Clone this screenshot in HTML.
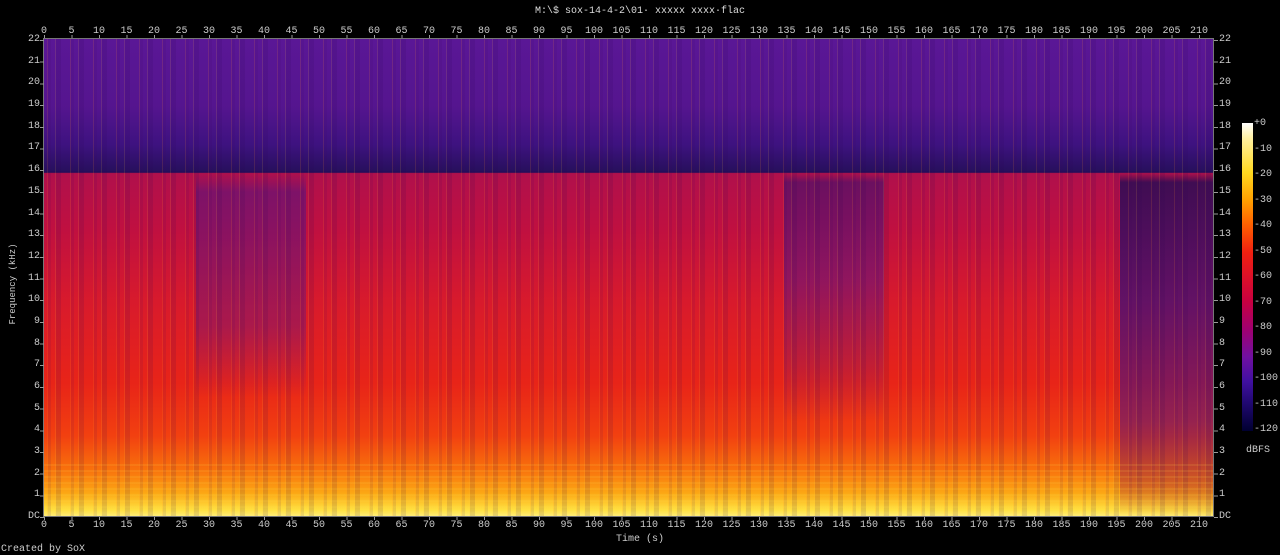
<!DOCTYPE html>
<html><head><style>
body{margin:0;background:#000;width:1280px;height:555px;overflow:hidden;position:relative;font-family:"Liberation Mono",monospace;font-size:10px;color:#ccc}
.a{position:absolute}
.t{position:absolute;transform:translateX(-50%);line-height:10px}
.f{position:absolute;line-height:10px;transform:translateY(-50%)}
#plot{left:44px;top:39px;width:1170px;height:478px;overflow:hidden;
background:linear-gradient(to bottom,#5a1796 0%,#55158f 14%,#3e1280 22%,#28105e 27.5%,#230d58 27.9%,#b0104c 28.1%,#c01040 40%,#d81a2c 55%,#e82418 72%,#f24010 83%,#f8700c 90%,#fca814 95%,#ffe040 98.5%,#fff080 100%)}
.o{position:absolute;top:0;height:100%}
</style></head><body>
<div class="a" style="left:0;top:6px;width:1280px;text-align:center;color:#ddd">M:\$ sox-14-4-2\01· xxxxx xxxx·flac</div>
<div class="a" id="plot">
 <div class="o" style="left:152px;width:110px;background:linear-gradient(to bottom,transparent 28%,rgba(80,20,130,.55) 32%,rgba(110,20,120,.45) 60%,transparent 75%)"></div>
 <div class="o" style="left:740px;width:100px;background:linear-gradient(to bottom,transparent 28%,rgba(60,15,110,.6) 30%,rgba(90,20,130,.55) 50%,rgba(110,20,110,.3) 68%,transparent 80%)"></div>
 <div class="o" style="left:1076px;width:94px;background:linear-gradient(to bottom,transparent 28%,rgba(35,12,85,.8) 30%,rgba(60,15,120,.75) 55%,rgba(90,20,120,.6) 80%,rgba(150,20,60,.4) 93%,transparent 100%)"></div>
 <div class="o" style="left:0;width:100%;background:repeating-linear-gradient(to right,rgba(255,160,40,0) 0 3px,rgba(255,140,40,.14) 3px 4px,rgba(60,0,90,.1) 4px 7px,rgba(0,0,0,0) 7px 11px,rgba(255,200,60,.12) 11px 12px,rgba(40,0,80,.12) 12px 17px,rgba(0,0,0,0) 17px 23px)"></div>
 <div class="o" style="left:0;width:100%;background:repeating-linear-gradient(to bottom,rgba(0,0,0,0) 0 4px,rgba(255,220,80,.12) 4px 6px);height:12%;top:88%"></div>
</div>
<div class="a" style="left:43px;top:38px;width:1171px;height:479px;border:1px solid #777;box-sizing:border-box"></div>
<div class="a" style="left:44px;top:35px;width:1170px;height:3px;background:repeating-linear-gradient(to right,#999 0 1px,transparent 1px 27.5px)"></div>
<div class="a" style="left:44px;top:517px;width:1170px;height:3px;background:repeating-linear-gradient(to right,#999 0 1px,transparent 1px 27.5px)"></div>
<div class="a" style="left:40px;top:40px;width:4px;height:478px;background:repeating-linear-gradient(to top,#999 0 1px,transparent 1px 21.68px)"></div>
<div class="a" style="left:1214px;top:40px;width:4px;height:478px;background:repeating-linear-gradient(to top,#999 0 1px,transparent 1px 21.68px)"></div>

<div style="position:absolute;top:27px;left:0">
<span class="t" style="left:44px">0</span><span class="t" style="left:71.5px">5</span><span class="t" style="left:99px">10</span><span class="t" style="left:126.5px">15</span><span class="t" style="left:154px">20</span><span class="t" style="left:181.5px">25</span><span class="t" style="left:209px">30</span><span class="t" style="left:236.5px">35</span><span class="t" style="left:264px">40</span><span class="t" style="left:291.5px">45</span><span class="t" style="left:319px">50</span><span class="t" style="left:346.5px">55</span><span class="t" style="left:374px">60</span><span class="t" style="left:401.5px">65</span><span class="t" style="left:429px">70</span><span class="t" style="left:456.5px">75</span><span class="t" style="left:484px">80</span><span class="t" style="left:511.5px">85</span><span class="t" style="left:539px">90</span><span class="t" style="left:566.5px">95</span><span class="t" style="left:594px">100</span><span class="t" style="left:621.5px">105</span><span class="t" style="left:649px">110</span><span class="t" style="left:676.5px">115</span><span class="t" style="left:704px">120</span><span class="t" style="left:731.5px">125</span><span class="t" style="left:759px">130</span><span class="t" style="left:786.5px">135</span><span class="t" style="left:814px">140</span><span class="t" style="left:841.5px">145</span><span class="t" style="left:869px">150</span><span class="t" style="left:896.5px">155</span><span class="t" style="left:924px">160</span><span class="t" style="left:951.5px">165</span><span class="t" style="left:979px">170</span><span class="t" style="left:1006.5px">175</span><span class="t" style="left:1034px">180</span><span class="t" style="left:1061.5px">185</span><span class="t" style="left:1089px">190</span><span class="t" style="left:1116.5px">195</span><span class="t" style="left:1144px">200</span><span class="t" style="left:1171.5px">205</span><span class="t" style="left:1199px">210</span>
</div>
<div style="position:absolute;top:521px;left:0">
<span class="t" style="left:44px">0</span><span class="t" style="left:71.5px">5</span><span class="t" style="left:99px">10</span><span class="t" style="left:126.5px">15</span><span class="t" style="left:154px">20</span><span class="t" style="left:181.5px">25</span><span class="t" style="left:209px">30</span><span class="t" style="left:236.5px">35</span><span class="t" style="left:264px">40</span><span class="t" style="left:291.5px">45</span><span class="t" style="left:319px">50</span><span class="t" style="left:346.5px">55</span><span class="t" style="left:374px">60</span><span class="t" style="left:401.5px">65</span><span class="t" style="left:429px">70</span><span class="t" style="left:456.5px">75</span><span class="t" style="left:484px">80</span><span class="t" style="left:511.5px">85</span><span class="t" style="left:539px">90</span><span class="t" style="left:566.5px">95</span><span class="t" style="left:594px">100</span><span class="t" style="left:621.5px">105</span><span class="t" style="left:649px">110</span><span class="t" style="left:676.5px">115</span><span class="t" style="left:704px">120</span><span class="t" style="left:731.5px">125</span><span class="t" style="left:759px">130</span><span class="t" style="left:786.5px">135</span><span class="t" style="left:814px">140</span><span class="t" style="left:841.5px">145</span><span class="t" style="left:869px">150</span><span class="t" style="left:896.5px">155</span><span class="t" style="left:924px">160</span><span class="t" style="left:951.5px">165</span><span class="t" style="left:979px">170</span><span class="t" style="left:1006.5px">175</span><span class="t" style="left:1034px">180</span><span class="t" style="left:1061.5px">185</span><span class="t" style="left:1089px">190</span><span class="t" style="left:1116.5px">195</span><span class="t" style="left:1144px">200</span><span class="t" style="left:1171.5px">205</span><span class="t" style="left:1199px">210</span>
</div>
<div class="a" style="left:0;top:534px;width:1280px;text-align:center">Time (s)</div>

<div class="a" style="left:0;top:0;width:40px;text-align:right">
<span class="f" style="right:0;top:40px">22</span><span class="f" style="right:0;top:61.7px">21</span><span class="f" style="right:0;top:83.4px">20</span><span class="f" style="right:0;top:105.1px">19</span><span class="f" style="right:0;top:126.8px">18</span><span class="f" style="right:0;top:148.4px">17</span><span class="f" style="right:0;top:170.1px">16</span><span class="f" style="right:0;top:191.8px">15</span><span class="f" style="right:0;top:213.5px">14</span><span class="f" style="right:0;top:235.2px">13</span><span class="f" style="right:0;top:256.8px">12</span><span class="f" style="right:0;top:278.5px">11</span><span class="f" style="right:0;top:300.2px">10</span><span class="f" style="right:0;top:321.9px">9</span><span class="f" style="right:0;top:343.6px">8</span><span class="f" style="right:0;top:365.2px">7</span><span class="f" style="right:0;top:387px">6</span><span class="f" style="right:0;top:408.6px">5</span><span class="f" style="right:0;top:430.3px">4</span><span class="f" style="right:0;top:452px">3</span><span class="f" style="right:0;top:473.6px">2</span><span class="f" style="right:0;top:495.3px">1</span><span class="f" style="right:0;top:517px">DC</span>
</div>
<div class="a" style="left:1219px;top:0;width:40px">
<span class="f" style="left:0;top:40px">22</span><span class="f" style="left:0;top:61.7px">21</span><span class="f" style="left:0;top:83.4px">20</span><span class="f" style="left:0;top:105.1px">19</span><span class="f" style="left:0;top:126.8px">18</span><span class="f" style="left:0;top:148.4px">17</span><span class="f" style="left:0;top:170.1px">16</span><span class="f" style="left:0;top:191.8px">15</span><span class="f" style="left:0;top:213.5px">14</span><span class="f" style="left:0;top:235.2px">13</span><span class="f" style="left:0;top:256.8px">12</span><span class="f" style="left:0;top:278.5px">11</span><span class="f" style="left:0;top:300.2px">10</span><span class="f" style="left:0;top:321.9px">9</span><span class="f" style="left:0;top:343.6px">8</span><span class="f" style="left:0;top:365.2px">7</span><span class="f" style="left:0;top:387px">6</span><span class="f" style="left:0;top:408.6px">5</span><span class="f" style="left:0;top:430.3px">4</span><span class="f" style="left:0;top:452px">3</span><span class="f" style="left:0;top:473.6px">2</span><span class="f" style="left:0;top:495.3px">1</span><span class="f" style="left:0;top:517px">DC</span>
</div>
<div class="a" style="left:-32px;top:279px;transform:rotate(-90deg);width:90px;text-align:center;white-space:nowrap;font-size:9px">Frequency (kHz)</div>

<div class="a" style="left:1242px;top:123px;width:11px;height:308px;background:linear-gradient(to bottom,#fff 0%,#fff0a0 5%,#ffd820 16%,#ffa000 25%,#ff6000 33%,#f02010 42%,#c80040 58%,#a00070 67%,#7010a0 76%,#4010a0 84%,#200870 91%,#000030 100%)"></div>
<div class="a" style="left:1254px;top:0">
<span class="f" style="left:0;top:124px">+0</span><span class="f" style="left:0;top:149.5px">-10</span><span class="f" style="left:0;top:175px">-20</span><span class="f" style="left:0;top:200.5px">-30</span><span class="f" style="left:0;top:226px">-40</span><span class="f" style="left:0;top:251.5px">-50</span><span class="f" style="left:0;top:277px">-60</span><span class="f" style="left:0;top:302.5px">-70</span><span class="f" style="left:0;top:328px">-80</span><span class="f" style="left:0;top:353.5px">-90</span><span class="f" style="left:0;top:379px">-100</span><span class="f" style="left:0;top:404.5px">-110</span><span class="f" style="left:0;top:430px">-120</span>
</div>
<div class="a" style="left:1246px;top:445px">dBFS</div>
<div class="a" style="left:1px;top:544px">Created by SoX</div>
</body></html>
